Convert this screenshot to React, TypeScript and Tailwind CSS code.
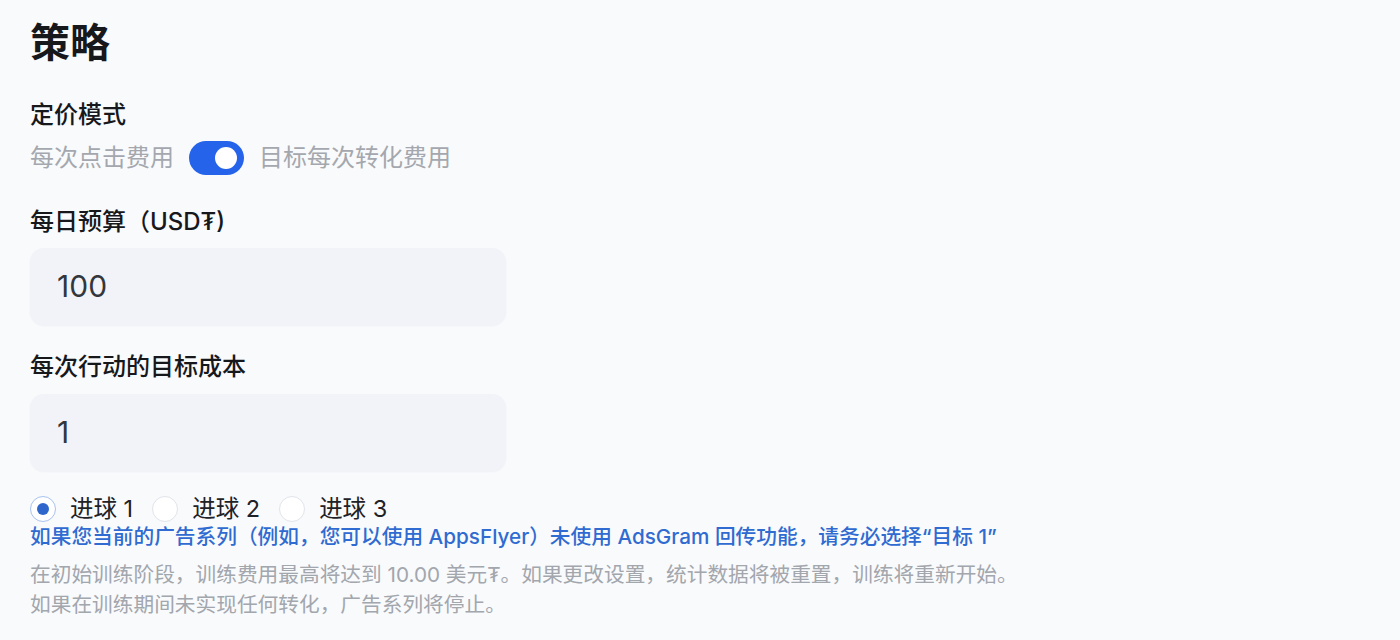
import { useState } from "react";

const FONT = { fontFamily: 'Inter, "Noto Sans CJK SC", "Noto Sans", sans-serif' };

const Radio = ({ checked, label, onClick }: { checked: boolean; label: string; onClick: () => void }) => (
  <button type="button" onClick={onClick} className="flex items-center gap-[14px]">
    <span
      className={`flex h-[26px] w-[26px] items-center justify-center rounded-full border bg-white ${
        checked ? "border-[#a9c2ee]" : "border-[#e1e4ea]"
      }`}
    >
      {checked && <span className="h-[12px] w-[12px] rounded-full bg-[#2f66cc]" />}
    </span>
    <span className="text-[23.5px] leading-[28px] text-[#1f2226]">{label}</span>
  </button>
);

export default function App() {
  const [cpa, setCpa] = useState(true);
  const [goal, setGoal] = useState(1);

  return (
    <div className="min-h-screen bg-[#f9fafc] pl-[30px] pt-[15px]" style={FONT}>
      <h1 className="text-[40px] font-bold leading-[56px] text-[#16181b]">策略</h1>

      {/* pricing mode */}
      <div className="mt-[28px] text-[24px] font-medium leading-[32px] text-[#16181b]">定价模式</div>
      <div className="mt-[10px] flex items-center gap-[15px] text-[24px] leading-[34px] text-[#a4a8ae]">
        <span>每次点击费用</span>
        <button
          type="button"
          onClick={() => setCpa(!cpa)}
          className={`flex h-[34px] w-[55px] items-center rounded-full px-[7px] ${
            cpa ? "justify-end bg-[#2563eb]" : "justify-start bg-[#d1d5db]"
          }`}
        >
          <span className="h-[22px] w-[22px] rounded-full bg-white" />
        </button>
        <span>目标每次转化费用</span>
      </div>

      {/* daily budget */}
      <div className="mt-[31px] text-[24px] font-medium leading-[32px] text-[#16181b]">每日预算（USD₮)</div>
      <div className="mt-[10px] flex h-[77px] w-[476px] items-center rounded-[14px] bg-[#f1f3f8] px-[27px] shadow-[0_1px_2px_rgba(30,50,90,0.05)]">
        <span className="text-[30px] text-[#33373d]">100</span>
      </div>

      {/* target cost */}
      <div className="mt-[26px] text-[24px] font-medium leading-[32px] text-[#16181b]">每次行动的目标成本</div>
      <div className="mt-[11px] flex h-[77px] w-[476px] items-center rounded-[14px] bg-[#f1f3f8] px-[27px] shadow-[0_1px_2px_rgba(30,50,90,0.05)]">
        <span className="text-[30px] text-[#33373d]">1</span>
      </div>

      <div className="mt-[24px] flex items-center gap-[19px]">
        {[1, 2, 3].map((n) => (
          <Radio key={n} checked={goal === n} label={`进球 ${n}`} onClick={() => setGoal(n)} />
        ))}
      </div>

      <p className="text-[20.7px] font-medium leading-[28px] text-[#2f6bd0]">
        如果您当前的广告系列（例如，您可以使用 AppsFlyer）未使用 AdsGram 回传功能，请务必选择“目标 1”
      </p>

      <p className="mt-[9px] text-[20.7px] leading-[30px] text-[#a2a6ad]">
        在初始训练阶段，训练费用最高将达到 10.00 美元₮。如果更改设置，统计数据将被重置，训练将重新开始。
        <br />
        如果在训练期间未实现任何转化，广告系列将停止。
      </p>
    </div>
  );
}
